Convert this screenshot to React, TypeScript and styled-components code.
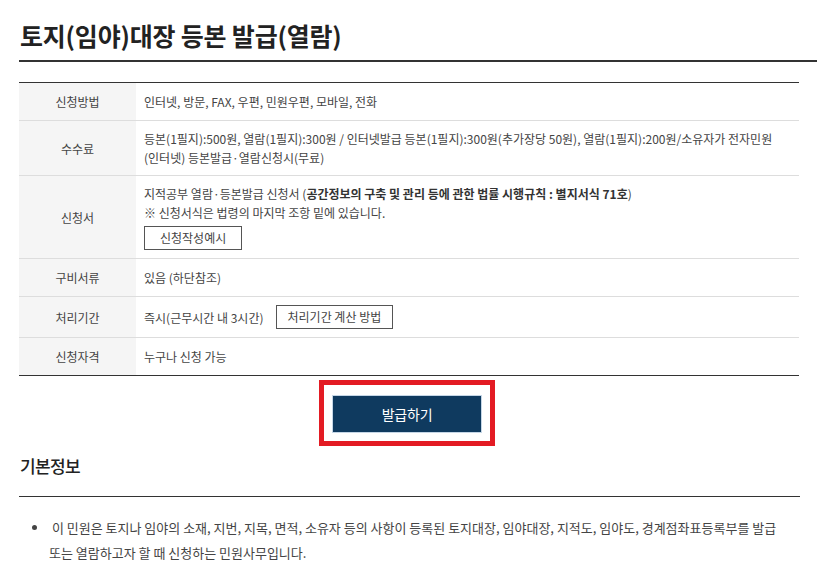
import styled, { createGlobalStyle } from 'styled-components'

const GlobalStyle = createGlobalStyle`
  body {
    margin: 0;
    background: #fff;
    font-family: 'Noto Sans CJK KR', 'Noto Sans', sans-serif;
    color: #444;
  }
`

const Page = styled.div`
  padding-left: 19px;
`

const Title = styled.h2`
  margin: 0;
  padding: 18px 0 8px 1px;
  font-size: 25px;
  line-height: 34px;
  font-weight: 700;
  color: #222;
  letter-spacing: -0.2px;
  border-bottom: 2px solid #333;
`

const Table = styled.table`
  width: 780px;
  margin-top: 20px;
  border-collapse: collapse;
  border-top: 1px solid #333;
  border-bottom: 1px solid #333;
  font-size: 12px;
`

const Row = styled.tr`
  & + & {
    border-top: 1px solid #ddd;
  }
`

const Head = styled.th`
  width: 117px;
  height: 38px;
  padding: 8px 0;
  box-sizing: border-box;
  background: #f5f5f5;
  font-weight: 400;
  color: #444;
  text-align: center;
  line-height: 19px;
`

const Cell = styled.td`
  padding: 8px 8px;
  line-height: 19px;
  color: #444;
  vertical-align: middle;
`

const Line = styled.span`
  display: block;
  height: 19px;
  white-space: nowrap;
`

const Strong = styled.b`
  font-weight: 700;
  color: #333;
`

const SmallButton = styled.button<{ $inline?: boolean }>`
  display: flex;
  align-items: center;
  box-sizing: border-box;
  width: fit-content;
  height: 24px;
  padding: 0 ${(p) => (p.$inline ? '11px' : '15px')};
  margin: ${(p) => (p.$inline ? '0 0 0 12px' : '4px 0 0')};
  border: 1px solid #555;
  background: #fff;
  font-family: inherit;
  font-size: 12px;
  line-height: 18px;
  color: #444;
`

const Inline = styled.div`
  display: flex;
  align-items: center;
`

const ActionRow = styled.div`
  width: 780px;
  display: flex;
  justify-content: center;
  margin-top: 4px;
`

const Highlight = styled.div`
  border: 5px solid #e31b23;
  padding: 10px 8px 8px 8px;
  margin-right: 4px;
`

const IssueButton = styled.button`
  display: block;
  width: 150px;
  height: 38px;
  background: #0f3a5f;
  border: 1px solid #c5d6e6;
  color: #fff;
  font-family: inherit;
  font-size: 14px;
  letter-spacing: -0.2px;
`

const Section = styled.h3`
  width: 780px;
  margin: 7px 0 0;
  padding: 0 0 17px 1px;
  font-size: 17px;
  line-height: 26px;
  font-weight: 500;
  color: #222;
  letter-spacing: -0.6px;
  border-bottom: 1px solid #333;
`

const List = styled.ul`
  width: 750px;
  margin: 18px 0 0;
  padding-left: 30px;
  font-size: 13px;
  line-height: 25px;
  color: #444;
  word-break: keep-all;
`

export default function App() {
  return (
    <>
      <GlobalStyle />
      <Page>
        <Title>토지(임야)대장 등본 발급(열람)</Title>

        <Table>
          <tbody>
            <Row>
              <Head>신청방법</Head>
              <Cell>인터넷, 방문, FAX, 우편, 민원우편, 모바일, 전화</Cell>
            </Row>
            <Row>
              <Head>수수료</Head>
              <Cell>
                <Line>
                  등본(1필지):500원, 열람(1필지):300원 / 인터넷발급 등본(1필지):300원(추가장당 50원), 열람(1필지):200원/소유자가 전자민원
                </Line>
                <Line>(인터넷) 등본발급·열람신청시(무료)</Line>
              </Cell>
            </Row>
            <Row>
              <Head>신청서</Head>
              <Cell>
                <Line>
                  지적공부 열람·등본발급 신청서 (
                  <Strong>공간정보의 구축 및 관리 등에 관한 법률 시행규칙 : 별지서식 71호</Strong>)
                </Line>
                <Line>※ 신청서식은 법령의 마지막 조항 밑에 있습니다.</Line>
                <SmallButton>신청작성예시</SmallButton>
              </Cell>
            </Row>
            <Row>
              <Head>구비서류</Head>
              <Cell>있음 (하단참조)</Cell>
            </Row>
            <Row>
              <Head>처리기간</Head>
              <Cell>
                <Inline>
                  즉시(근무시간 내 3시간)
                  <SmallButton $inline>처리기간 계산 방법</SmallButton>
                </Inline>
              </Cell>
            </Row>
            <Row>
              <Head>신청자격</Head>
              <Cell>누구나 신청 가능</Cell>
            </Row>
          </tbody>
        </Table>

        <ActionRow>
          <Highlight>
            <IssueButton>발급하기</IssueButton>
          </Highlight>
        </ActionRow>

        <Section>기본정보</Section>

        <List>
          <li>
            &nbsp;이 민원은 토지나 임야의 소재, 지번, 지목, 면적, 소유자 등의 사항이 등록된 토지대장, 임야대장, 지적도, 임야도, 경계점좌표등록부를 발급
            또는 열람하고자 할 때 신청하는 민원사무입니다.
          </li>
        </List>
      </Page>
    </>
  )
}
